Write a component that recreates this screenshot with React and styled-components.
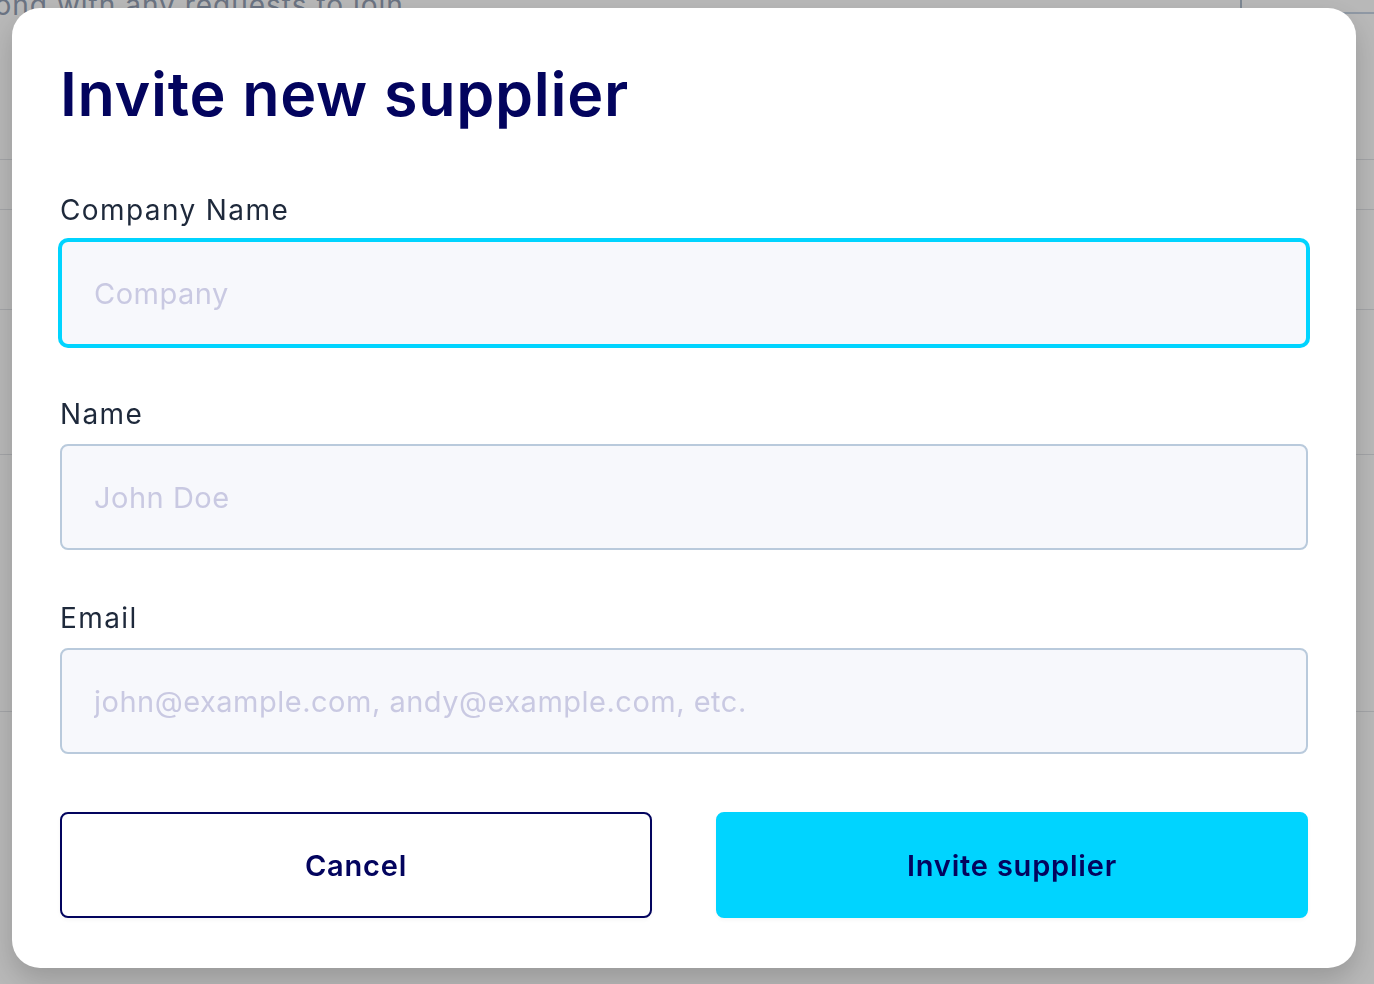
import React from 'react';
import styled, { createGlobalStyle } from 'styled-components';

const GlobalStyle = createGlobalStyle`
  html, body {
    margin: 0;
    padding: 0;
    overflow: hidden;
  }
  body {
    font-family: Inter, "Noto Sans", Arial, sans-serif;
  }
  * {
    box-sizing: border-box;
  }
`;

// Page behind the dialog (only its edges show through)

const Page = styled.div`
  background: #ffffff;
  height: 100vh;
  overflow: hidden;
`;

const PageTop = styled.div`
  display: flex;
  justify-content: space-between;
  align-items: flex-start;
  height: 160px;
  border-bottom: 1px solid #e2e4e8;
`;

const PageIntro = styled.p`
  margin: -13px 0 0 -30px;
  font-size: 28px;
  line-height: 36px;
  letter-spacing: 1px;
  color: #94a0b4;
`;

const SearchBox = styled.div`
  width: 134px;
  height: 14px;
  border-left: 2px solid #aebccc;
  border-bottom: 2px solid #c6d3e3;
`;

const PageRow = styled.div`
  height: ${props => props.h}px;
  border-bottom: 1px solid #e2e4e8;
`;

// Dialog

const Overlay = styled.div`
  position: fixed;
  inset: 0;
  background: rgba(0, 0, 0, 0.28);
  display: flex;
  align-items: flex-start;
  padding: 8px 18px 16px 12px;
`;

const Modal = styled.div`
  width: 100%;
  background: #ffffff;
  border-radius: 28px;
  padding: 50px 48px 50px;
  box-shadow: 0 12px 28px rgba(0, 0, 0, 0.18);
`;

const Title = styled.h1`
  margin: 0 0 62px;
  font-size: 61px;
  line-height: 72px;
  font-weight: 600;
  color: #03045e;
  letter-spacing: 0.7px;
`;

const Field = styled.div`
  display: flex;
  flex-direction: column;
  margin-bottom: ${props => (props.last ? 0 : 50)}px;
`;

const Label = styled.label`
  font-size: 28px;
  line-height: 36px;
  letter-spacing: 1.4px;
  color: #1e293b;
  margin-bottom: 12px;
`;

const Input = styled.input`
  height: 106px;
  padding: 0 32px;
  background: #f7f8fc;
  border: 2px solid ${props => (props.focused ? '#00d4ff' : '#b9cadc')};
  box-shadow: ${props => (props.focused ? '0 0 0 2px #00d4ff' : 'none')};
  border-radius: 8px;
  font-family: inherit;
  font-size: 29px;
  letter-spacing: 0.5px;
  color: #1e293b;
  outline: none;
  &::placeholder {
    color: #c9c9e2;
  }
`;

const Actions = styled.div`
  display: grid;
  grid-template-columns: 1fr 1fr;
  gap: 64px;
  margin-top: 58px;
`;

const Button = styled.button`
  height: 106px;
  border-radius: 8px;
  font-family: inherit;
  font-size: 29px;
  font-weight: 600;
  letter-spacing: 0.8px;
  color: #03045e;
  cursor: pointer;
  background: ${props => (props.primary ? '#00d4ff' : '#ffffff')};
  border: 2px solid ${props => (props.primary ? '#00d4ff' : '#03045e')};
  box-shadow: 0 2px 4px rgba(0, 0, 0, 0.04);
`;

const FormBody = styled.form`
  display: flex;
  flex-direction: column;
`;

export default function App() {
  return (
    <>
      <GlobalStyle />
      <Page>
        <PageTop>
          <PageIntro>along with any requests to join</PageIntro>
          <SearchBox />
        </PageTop>
        <PageRow h={50} />
        <PageRow h={100} />
        <PageRow h={145} />
        <PageRow h={257} />
      </Page>
      <Overlay>
        <Modal role="dialog">
          <Title>Invite new supplier</Title>
          <FormBody onSubmit={e => e.preventDefault()}>
            <Field>
              <Label>Company Name</Label>
              <Input focused placeholder="Company" />
            </Field>
            <Field>
              <Label>Name</Label>
              <Input placeholder="John Doe" />
            </Field>
            <Field last>
              <Label>Email</Label>
              <Input placeholder="john@example.com, andy@example.com, etc." />
            </Field>
            <Actions>
              <Button type="button">Cancel</Button>
              <Button primary type="submit">Invite supplier</Button>
            </Actions>
          </FormBody>
        </Modal>
      </Overlay>
    </>
  );
}
